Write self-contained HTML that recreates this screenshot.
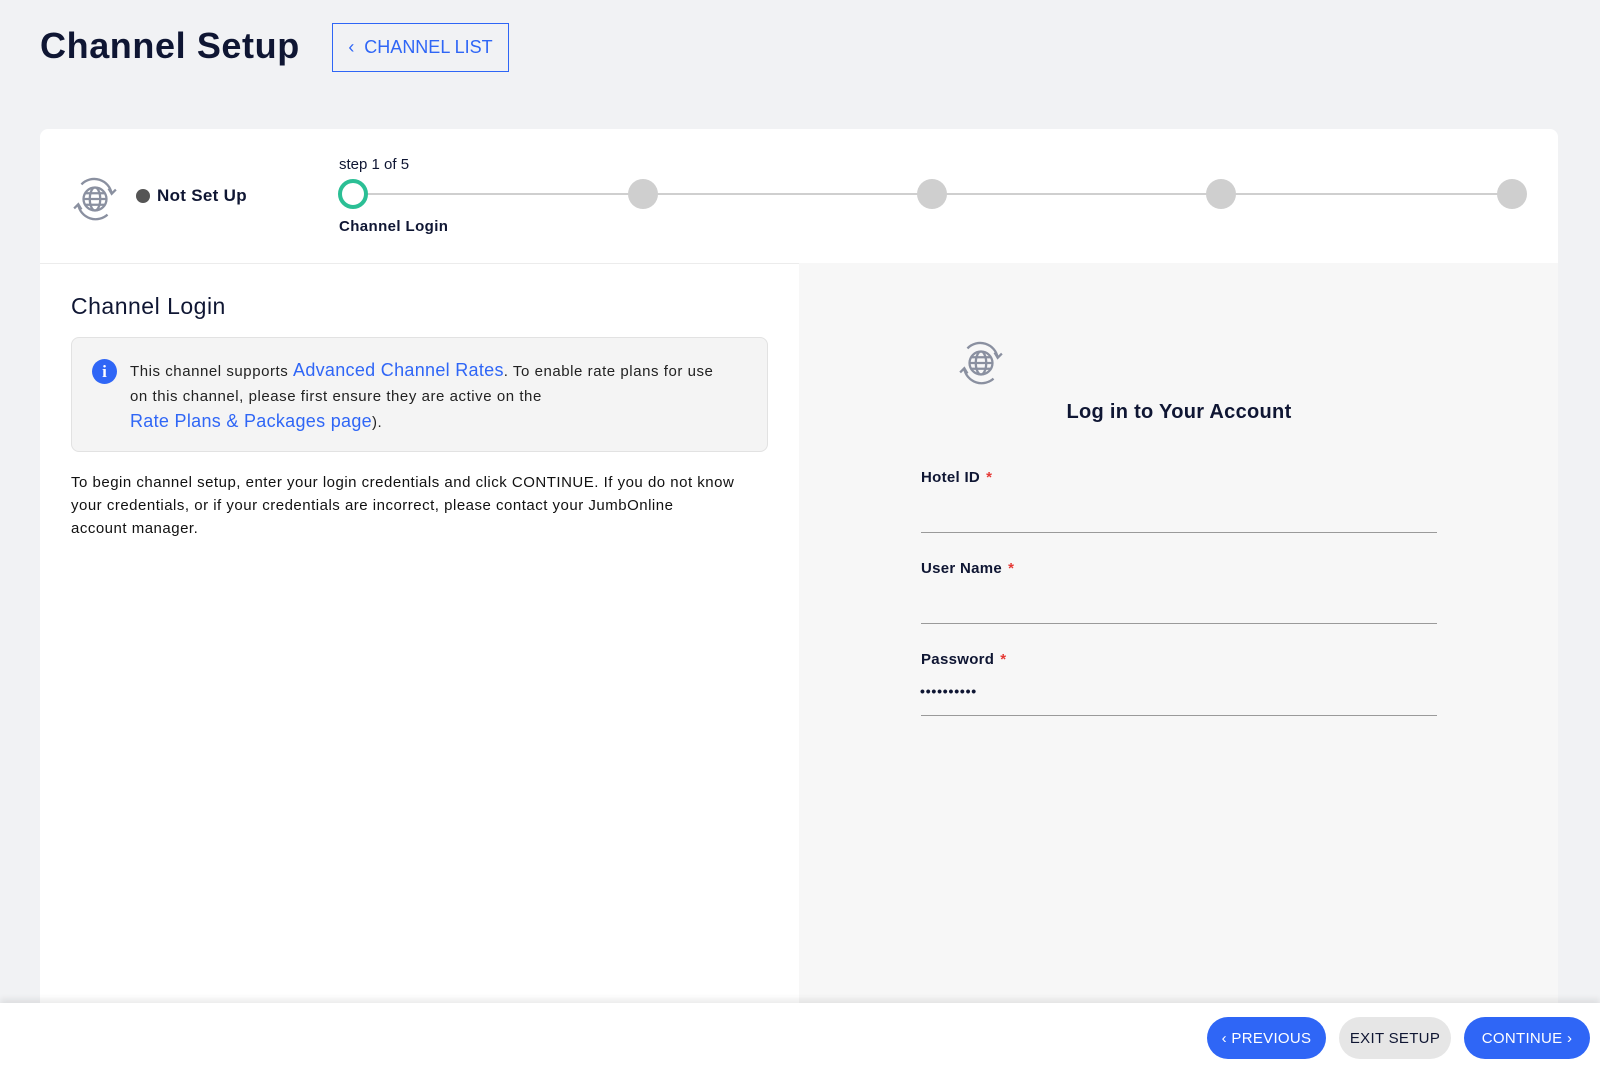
<!DOCTYPE html>
<html><head><style>
*{margin:0;padding:0;box-sizing:border-box}
body{width:1600px;height:1072px;background:#f1f2f4;font-family:"Liberation Sans",sans-serif;color:#0f1633;position:relative;overflow:hidden}
.a{position:absolute}
.lbl{font-size:15px;font-weight:bold;color:#0f1633;letter-spacing:0.3px}
.lbl span{color:#e53935;margin-left:6px}
.ul{position:absolute;left:921px;width:516px;height:1px;background:#9a9a9a}
.dot{position:absolute;width:30px;height:30px;border-radius:50%;background:#cfcfcf;top:179px}
.btn{position:absolute;top:1017px;height:42px;border-radius:21px;font-size:15px;display:flex;align-items:center;justify-content:center;font-weight:500;letter-spacing:0.3px}
a{color:#2f66f6;text-decoration:none;font-size:18px}
</style></head><body>
<div class="a" style="left:40px;top:25px;font-size:36px;font-weight:bold;letter-spacing:0.6px">Channel Setup</div>
<div class="a" style="left:332px;top:23px;width:177px;height:49px;border:1px solid #2f66f6;color:#2f66f6;font-size:18px;display:flex;align-items:center;justify-content:center">‹&nbsp;&nbsp;CHANNEL LIST</div>

<div class="a" style="left:40px;top:129px;width:1518px;height:900px;background:#fff;border-radius:8px;overflow:hidden">
  <div class="a" style="left:0;top:134px;width:1518px;height:1px;background:#ececec"></div>
  <div class="a" style="left:759px;top:134px;width:759px;height:800px;background:#f7f7f7"></div>
</div>

<svg class="a" style="left:71px;top:175px" width="48" height="48" viewBox="0 0 46 46" fill="none" stroke="#8a90a0" stroke-width="2.2">
<circle cx="23" cy="23" r="11"/><ellipse cx="23" cy="23" rx="5" ry="11"/><line x1="12" y1="23" x2="34" y2="23"/><line x1="13.5" y1="17.5" x2="32.5" y2="17.5"/><line x1="13.5" y1="28.5" x2="32.5" y2="28.5"/>
<path d="M39 18 A17 17 0 0 0 10 9"/><path d="M7 29 A17 17 0 0 0 35 38"/><path d="M36 13 l3 5 l4 -4"/><path d="M3 32 l4 -4 l3 5"/></svg>
<div class="a" style="left:136px;top:189px;width:14px;height:14px;border-radius:50%;background:#555"></div>
<div class="a" style="left:157px;top:186px;font-size:17px;font-weight:bold;letter-spacing:0.3px">Not Set Up</div>

<div class="a" style="left:339px;top:156px;font-size:15px">step 1 of 5</div>
<div class="a" style="left:360px;top:193px;width:1152px;height:2px;background:#cfcfcf"></div>
<div class="a" style="left:338px;top:179px;width:30px;height:30px;border-radius:50%;background:#fff;border:4px solid #2bbf95"></div>
<div class="dot" style="left:628px"></div><div class="dot" style="left:917px"></div><div class="dot" style="left:1206px"></div><div class="dot" style="left:1497px"></div>
<div class="a" style="left:339px;top:218px;font-size:15px;font-weight:bold;letter-spacing:0.4px">Channel Login</div>

<div class="a" style="left:71px;top:293px;font-size:23px;letter-spacing:0.5px">Channel Login</div>
<div class="a" style="left:71px;top:337px;width:697px;height:115px;background:#f4f4f4;border:1px solid #e2e2e2;border-radius:8px"></div>
<div class="a" style="left:92px;top:359px;width:25px;height:25px;border-radius:50%;background:#2f66f6;color:#fff;font-weight:bold;font-size:17px;text-align:center;line-height:25px;font-family:'Liberation Serif',serif">i</div>
<div class="a" style="left:130px;top:358px;white-space:nowrap;font-size:15px;line-height:24.5px;color:#222;letter-spacing:0.55px">This channel supports <a style="letter-spacing:0.3px">Advanced Channel Rates</a>. To enable rate plans for use<br>on this channel, please first ensure they are active on the<br><a style="letter-spacing:0.3px">Rate Plans &amp; Packages page</a>).</div>
<div class="a" style="left:71px;top:471px;white-space:nowrap;font-size:15px;line-height:23px;color:#111;letter-spacing:0.5px">To begin channel setup, enter your login credentials and click CONTINUE. If you do not know<br>your credentials, or if your credentials are incorrect, please contact your JumbOnline<br>account manager.</div>

<svg class="a" style="left:957px;top:339px" width="48" height="48" viewBox="0 0 46 46" fill="none" stroke="#8a90a0" stroke-width="2.2">
<circle cx="23" cy="23" r="11"/><ellipse cx="23" cy="23" rx="5" ry="11"/><line x1="12" y1="23" x2="34" y2="23"/><line x1="13.5" y1="17.5" x2="32.5" y2="17.5"/><line x1="13.5" y1="28.5" x2="32.5" y2="28.5"/>
<path d="M39 18 A17 17 0 0 0 10 9"/><path d="M7 29 A17 17 0 0 0 35 38"/><path d="M36 13 l3 5 l4 -4"/><path d="M3 32 l4 -4 l3 5"/></svg>
<div class="a" style="left:979px;top:401px;width:400px;text-align:center;font-size:20px;font-weight:bold;letter-spacing:0.3px">Log in to Your Account</div>
<div class="a lbl" style="left:921px;top:469px">Hotel ID<span>*</span></div><div class="ul" style="top:532px"></div>
<div class="a lbl" style="left:921px;top:560px">User Name<span>*</span></div><div class="ul" style="top:623px"></div>
<div class="a lbl" style="left:921px;top:651px">Password<span>*</span></div>
<div class="a" style="left:920px;top:683px;font-size:14px;letter-spacing:0.8px;font-weight:bold">••••••••••</div><div class="ul" style="top:715px"></div>

<div class="a" style="left:0;top:1003px;width:1600px;height:69px;background:#fff;box-shadow:0 -4px 6px rgba(0,0,0,0.08)"></div>
<div class="btn" style="left:1207px;width:119px;background:#2f66f6;color:#fff">‹ PREVIOUS</div>
<div class="btn" style="left:1339px;width:112px;background:#e6e6e6;color:#0f1633">EXIT SETUP</div>
<div class="btn" style="left:1464px;width:126px;background:#2f66f6;color:#fff">CONTINUE ›</div>
</body></html>
